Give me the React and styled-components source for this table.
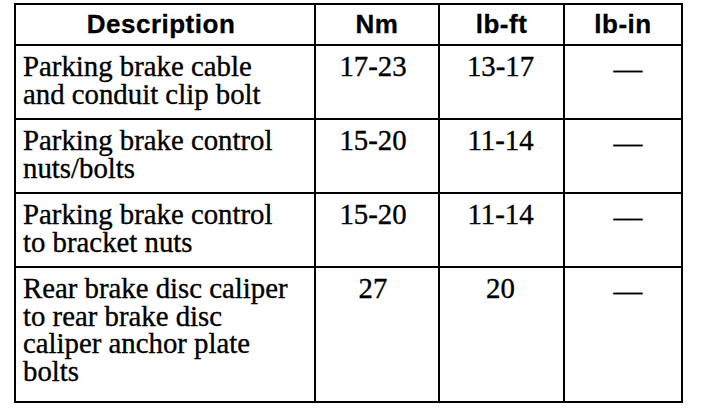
import React from "react";
import styled, { createGlobalStyle } from "styled-components";

const Global = createGlobalStyle`
  html, body { margin: 0; padding: 0; background: #fff; }
  body { font-family: "Liberation Serif", "Times New Roman", serif; color: #000; }
`;

const Page = styled.div`
  padding: 3px 0 0 14px;
`;

const Table = styled.div`
  display: grid;
  grid-template-columns: 300px 124px 125px 118px;
  grid-template-rows: 41px 74px 74px 74px 135px;
  width: 669px;
  box-sizing: border-box;
  border-top: 2px solid #000;
  border-left: 2px solid #000;
`;

const Cell = styled.div`
  box-sizing: border-box;
  border-right: 2px solid #000;
  border-bottom: 2px solid #000;
  min-width: 0;
`;

const HeadCell = styled(Cell)`
  display: flex;
  align-items: center;
  justify-content: center;
  font-family: "Liberation Sans", Arial, sans-serif;
  font-weight: 700;
  font-size: 26px;
  letter-spacing: 0.5px;
  -webkit-text-stroke: 0.3px #000;
  padding-right: ${(p) => (p.$wide ? "8px" : "0")};
`;

const BodyCell = styled(Cell)`
  font-family: "Liberation Serif", "Times New Roman", serif;
  font-size: 28.8px;
  line-height: 27.5px;
  -webkit-text-stroke: 0.35px #000;
  padding-top: ${(p) => (p.$dash ? "10px" : "7px")};
  text-align: ${(p) => (p.$left ? "left" : "center")};
  padding-left: ${(p) => (p.$left ? "7px" : p.$shift > 0 ? `${p.$shift * 2}px` : "0")};
  padding-right: ${(p) => (p.$shift < 0 ? `${-p.$shift * 2}px` : "0")};
`;

const Line = styled.div`
  white-space: nowrap;
`;

const rows = [
  { desc: ["Parking brake cable", "and conduit clip bolt"], nm: "17-23", ft: "13-17" },
  { desc: ["Parking brake control", "nuts/bolts"], nm: "15-20", ft: "11-14" },
  { desc: ["Parking brake control", "to bracket nuts"], nm: "15-20", ft: "11-14" },
  {
    desc: ["Rear brake disc caliper", "to rear brake disc", "caliper anchor plate", "bolts"],
    nm: "27",
    ft: "20",
  },
];

export default function App() {
  return (
    <Page>
      <Global />
      <Table>
        <HeadCell $wide>Description</HeadCell>
        <HeadCell>Nm</HeadCell>
        <HeadCell>lb-ft</HeadCell>
        <HeadCell>lb-in</HeadCell>
        {rows.map((r, i) => (
          <React.Fragment key={i}>
            <BodyCell $left>
              {r.desc.map((l, j) => (
                <Line key={j}>{l}</Line>
              ))}
            </BodyCell>
            <BodyCell $shift={-4}>{r.nm}</BodyCell>
            <BodyCell $shift={-1}>{r.ft}</BodyCell>
            <BodyCell $shift={5} $dash>—</BodyCell>
          </React.Fragment>
        ))}
      </Table>
    </Page>
  );
}
